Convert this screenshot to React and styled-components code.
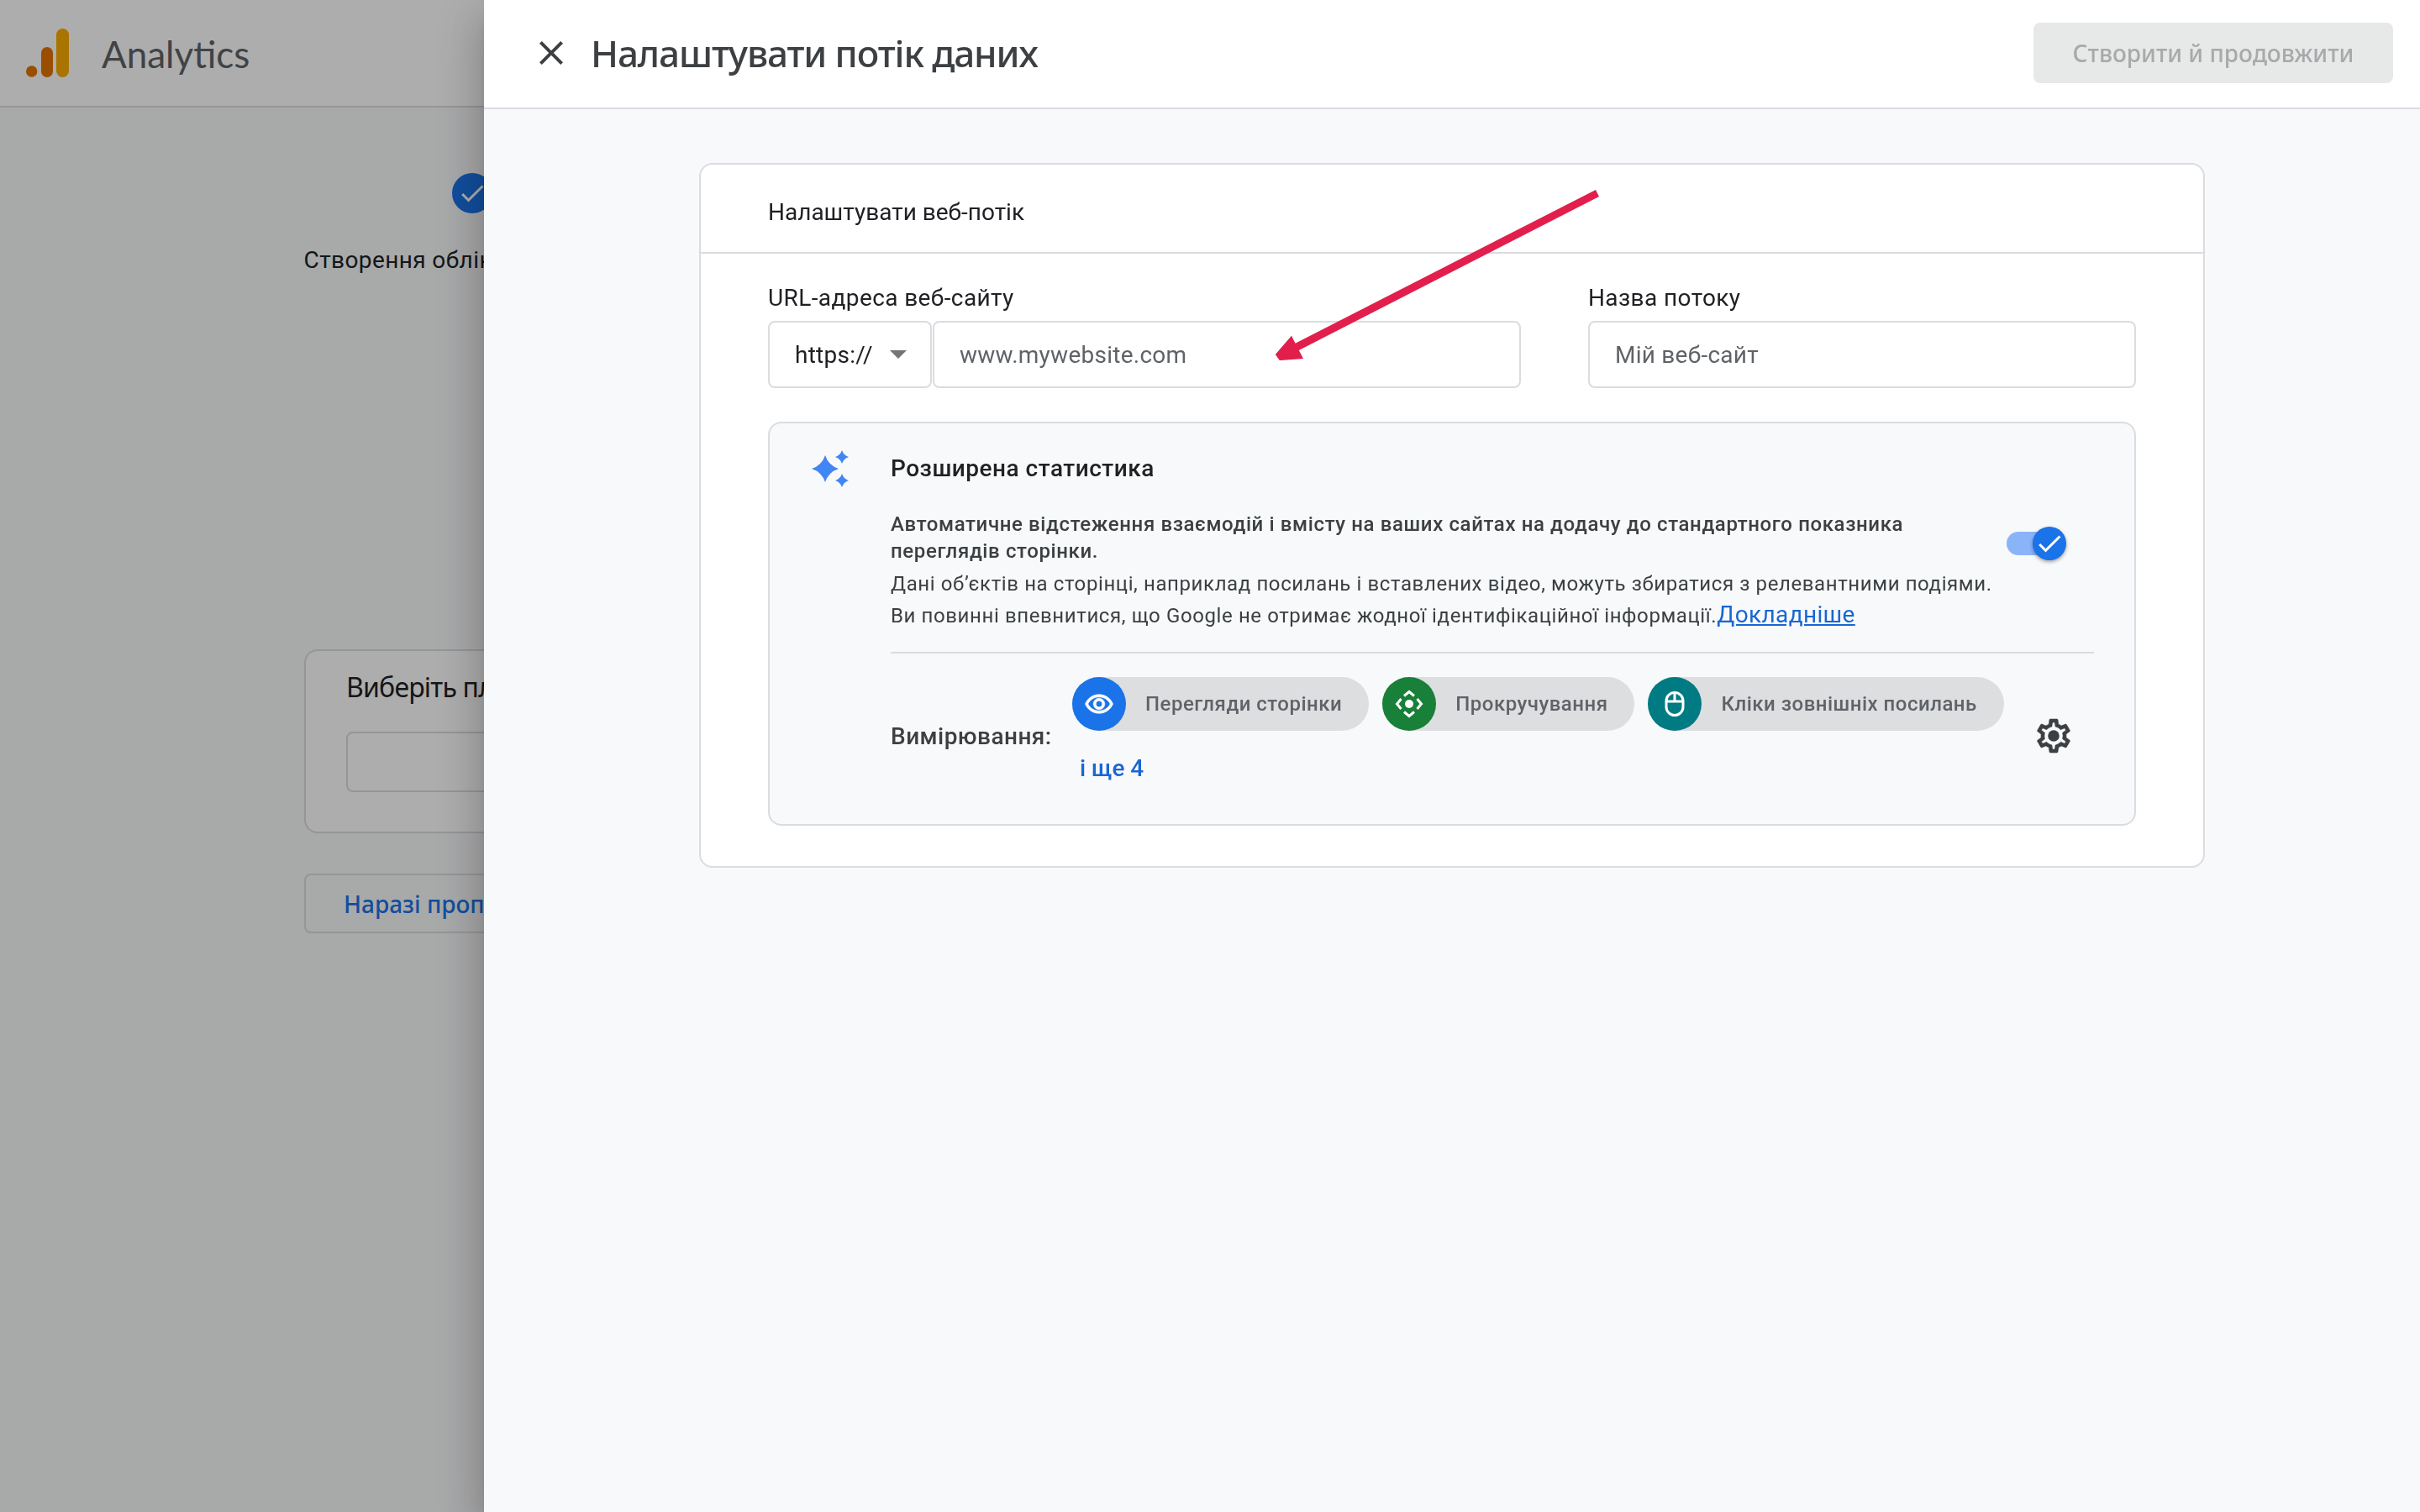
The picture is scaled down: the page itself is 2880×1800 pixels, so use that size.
import React from "react";
import styled, { createGlobalStyle } from "styled-components";

const SANS = '"Noto Sans", "Open Sans", sans-serif';
const BODY = 'Roboto, "Noto Sans", sans-serif';

const Global = createGlobalStyle`
  html, body { margin: 0; padding: 0; height: 1800px; overflow: hidden; background: #f8f9fa; }
  * { box-sizing: border-box; }
  body { font-family: ${BODY}; color: #202124; }
`;

/* ---------- page behind the panel ---------- */
const Page = styled.div`
  width: 2880px;
  height: 1800px;
  background: #f8f9fa;
  overflow: hidden;
`;
const TopBar = styled.header`
  height: 128px;
  background: #fff;
  border-bottom: 2px solid #dadce0;
  display: flex;
  align-items: center;
  padding-left: 31px;
  gap: 39px;
`;
const Logo = styled.svg`
  width: 51px;
  height: 58px;
  flex: none;
`;
const Brand = styled.span`
  font-family: "Lato", ${SANS};
  font-size: 44px;
  color: #5f6368;
  position: relative;
  top: 1px;
`;
const Main = styled.main`
  padding: 78px 0 0 362px;
`;
const Step = styled.div`
  width: 400px;
  display: flex;
  flex-direction: column;
  align-items: center;
`;
const StepDot = styled.div`
  width: 48px;
  height: 48px;
  border-radius: 50%;
  background: #1a73e8;
  display: flex;
  align-items: center;
  justify-content: center;
`;
const StepLabel = styled.div`
  margin-top: 38px;
  font-size: 28px;
  line-height: 36px;
  letter-spacing: 0.4px;
  white-space: nowrap;
  color: #202124;
`;
const PlanCard = styled.section`
  margin-top: 445px;
  width: 1200px;
  height: 219px;
  border: 2px solid #dadce0;
  border-radius: 16px;
  background: #fff;
  padding: 21px 48px;
`;
const PlanTitle = styled.div`
  font-family: ${SANS};
  font-size: 32px;
  line-height: 44px;
  letter-spacing: -0.8px;
  color: #202124;
`;
const PlanField = styled.div`
  margin-top: 31px;
  height: 72px;
  border: 2px solid #dadce0;
  border-radius: 8px;
`;
const SkipButton = styled.div`
  margin-top: 48px;
  width: 800px;
  height: 71px;
  border: 2px solid #dadce0;
  border-radius: 8px;
  display: flex;
  align-items: center;
  padding-left: 45px;
  font-family: ${SANS};
  font-size: 28px;
  font-weight: 500;
  color: #1a73e8;
`;
const Scrim = styled.div`
  position: fixed;
  inset: 0;
  background: rgba(0, 0, 0, 0.32);
`;

/* ---------- slide-in panel ---------- */
const Panel = styled.aside`
  position: fixed;
  top: 0;
  bottom: 0;
  left: 576px;
  right: 0;
  background: #f8f9fa;
  display: flex;
  flex-direction: column;
  box-shadow: 0 16px 20px -10px rgba(0, 0, 0, 0.2), 0 32px 48px 4px rgba(0, 0, 0, 0.14),
    0 12px 60px 10px rgba(0, 0, 0, 0.12);
`;
const PanelHeader = styled.div`
  height: 130px;
  flex: none;
  background: #fff;
  border-bottom: 2px solid #dadce0;
  display: flex;
  align-items: center;
  padding: 0 32px 2px 56px;
`;
const CloseIcon = styled.svg`
  width: 48px;
  height: 48px;
  fill: #3c4043;
  flex: none;
`;
const PanelTitle = styled.h1`
  margin: 0 0 0 23px;
  font-family: ${SANS};
  font-size: 44px;
  font-weight: 500;
  letter-spacing: -1.1px;
  color: #3c4043;
  flex: 1;
`;
const PrimaryButton = styled.button`
  width: 428px;
  height: 72px;
  border: 0;
  border-radius: 8px;
  background: #e7e8e8;
  color: #a7a9aa;
  font-family: ${SANS};
  font-size: 28px;
  font-weight: 500;
`;
const PanelBody = styled.div`
  flex: 1;
  padding-top: 64px;
`;
const Card = styled.section`
  width: 1792px;
  margin: 0 auto;
  background: #fff;
  border: 2px solid #dadce0;
  border-radius: 16px;
  padding-bottom: 48px;
`;
const CardHeader = styled.div`
  height: 106px;
  border-bottom: 2px solid #dadce0;
  padding: 8px 80px 0;
  display: flex;
  align-items: center;
  font-size: 28px;
  color: #202124;
`;
const FormGrid = styled.div`
  display: grid;
  grid-template-columns: 896px 652px;
  column-gap: 80px;
  padding: 35px 80px 0;
`;
const Label = styled.label`
  display: block;
  font-size: 28px;
  line-height: 36px;
  letter-spacing: 0.4px;
  margin-bottom: 9px;
  color: #202124;
`;
const InputRow = styled.div`
  display: flex;
  gap: 1px;
`;
const Select = styled.div`
  width: 195px;
  height: 80px;
  border: 2px solid #dadce0;
  border-radius: 8px;
  background: #fff;
  display: flex;
  align-items: center;
  padding-left: 30px;
  font-size: 28px;
  letter-spacing: 0.25px;
  color: #202124;
  flex: none;
`;
const Caret = styled.span`
  margin-left: 20px;
  border-left: 10px solid transparent;
  border-right: 10px solid transparent;
  border-top: 10px solid #757575;
`;
const TextField = styled.input`
  flex: 1;
  width: 100%;
  min-width: 0;
  height: 80px;
  border: 2px solid #dadce0;
  border-radius: 8px;
  background: #fff;
  padding: 0 30px;
  font-family: ${BODY};
  font-size: 28px;
  letter-spacing: 0.25px;
  color: #202124;
  &::placeholder { color: #5f6368; opacity: 1; }
`;
const Banner = styled.div`
  margin: 40px 80px 0;
  height: 481px;
  border: 2px solid #dadce0;
  border-radius: 16px;
  background: #f8f9fa;
  display: flex;
`;
const SparkleBox = styled.div`
  width: 144px;
  flex: none;
  padding: 32px 0 0 50px;
`;
const Sparkle = styled.svg`
  width: 46px;
  height: 46px;
  fill: #4285f4;
  display: block;
`;
const BannerMain = styled.div`
  width: 1432px;
  padding-top: 34px;
`;
const BannerTitle = styled.div`
  font-size: 28px;
  line-height: 40px;
  font-weight: 500;
  letter-spacing: 0.5px;
  color: #202124;
`;
const DescRow = styled.div`
  display: flex;
  margin-top: 30px;
  padding-bottom: 27px;
  border-bottom: 2px solid #dadce0;
`;
const Desc = styled.div`
  width: 1328px;
  flex: none;
  font-size: 24px;
  letter-spacing: 0.6px;
  color: #3c4043;
`;
const Strong = styled.p`
  margin: 0;
  font-weight: 500;
  line-height: 32px;
  letter-spacing: 0.62px;
`;
const Line = styled.p`
  margin: 7px 0 0;
  line-height: 32px;
  & + & { margin-top: 5px; }
`;
const MoreLink = styled.a`
  font-size: 28px;
  letter-spacing: 0.36px;
  color: #1967d2;
  text-decoration: underline;
`;
const Toggle = styled.div`
  width: 61px;
  height: 28px;
  margin-top: 25px;
  border-radius: 14px;
  background: #8ab4f8;
  display: flex;
  align-items: center;
  flex: none;
`;
const Thumb = styled.div`
  width: 40px;
  height: 40px;
  border-radius: 50%;
  background: #1a73e8;
  margin-left: auto;
  margin-right: -10px;
  flex: none;
  display: flex;
  align-items: center;
  justify-content: center;
  box-shadow: 0 2px 4px rgba(0, 0, 0, 0.35);
`;
const Metrics = styled.div`
  display: flex;
  margin-top: 28px;
`;
const MetricsLabel = styled.div`
  width: 216px;
  flex: none;
  align-self: center;
  font-size: 28px;
  font-weight: 500;
  letter-spacing: 0.45px;
  color: #3c4043;
`;
const MetricsBody = styled.div`
  height: 140px;
`;
const Chips = styled.div`
  display: flex;
  gap: 16px;
`;
const Chip = styled.div`
  height: 64px;
  border-radius: 32px;
  background: #dddee0;
  display: flex;
  align-items: center;
  padding-right: 32px;
  font-size: 24px;
  font-weight: 500;
  letter-spacing: 0.5px;
  color: #5f6368;
`;
const ChipIcon = styled.div`
  width: 64px;
  height: 64px;
  border-radius: 50%;
  background: ${(p) => p.$color};
  margin-right: 23px;
  display: flex;
  align-items: center;
  justify-content: center;
  flex: none;
`;
const EyeGlyph = styled.svg`
  width: 36px;
  height: 36px;
  fill: #fff;
  stroke: #fff;
  stroke-width: 0.45;
`;
const More = styled.a`
  display: block;
  margin: 28px 0 0 9px;
  font-size: 28px;
  font-weight: 500;
  color: #1967d2;
`;
const Gear = styled.svg`
  width: 48px;
  height: 48px;
  margin: 46px 0 0 35px;
  fill: #3c4043;
  stroke: #3c4043;
  stroke-width: 0.3;
  flex: none;
`;
const Arrow = styled.svg`
  position: fixed;
  left: 1500px;
  top: 220px;
  width: 420px;
  height: 220px;
`;

const GEAR =
  "M19.43 12.98c.04-.32.07-.64.07-.98 0-.34-.03-.66-.07-.98l2.11-1.65c.19-.15.24-.42.12-.64l-2-3.46c-.09-.16-.26-.25-.44-.25-.06 0-.12.01-.17.03l-2.49 1c-.52-.4-1.08-.73-1.69-.98l-.38-2.65C14.46 2.18 14.25 2 14 2h-4c-.25 0-.46.18-.49.42l-.38 2.65c-.61.25-1.17.59-1.69.98l-2.49-1c-.06-.02-.12-.03-.18-.03-.17 0-.34.09-.43.25l-2 3.46c-.13.22-.07.49.12.64l2.11 1.65c-.04.32-.07.65-.07.98 0 .33.03.66.07.98l-2.11 1.65c-.19.15-.24.42-.12.64l2 3.46c.09.16.26.25.44.25.06 0 .12-.01.17-.03l2.49-1c.52.4 1.08.73 1.69.98l.38 2.65c.03.24.24.42.49.42h4c.25 0 .46-.18.49-.42l.38-2.65c.61-.25 1.17-.59 1.69-.98l2.49 1c.06.02.12.03.18.03.17 0 .34-.09.43-.25l2-3.46c.12-.22.07-.49-.12-.64l-2.11-1.65zm-1.98-1.71c.04.31.05.52.05.73 0 .21-.02.43-.05.73l-.14 1.13.89.7 1.08.84-.7 1.21-1.27-.51-1.04-.42-.9.68c-.43.32-.84.56-1.25.73l-1.06.43-.16 1.13-.2 1.35h-1.4l-.19-1.35-.16-1.13-1.06-.43c-.43-.18-.83-.41-1.23-.71l-.91-.7-1.06.43-1.27.51-.7-1.21 1.08-.84.89-.7-.14-1.13c-.03-.31-.05-.54-.05-.74s.02-.43.05-.73l.14-1.13-.89-.7-1.08-.84.7-1.21 1.27.51 1.04.42.9-.68c.43-.32.84-.56 1.25-.73l1.06-.43.16-1.13.2-1.35h1.39l.19 1.35.16 1.13 1.06.43c.43.18.83.41 1.23.71l.91.7 1.06-.43 1.27-.51.7 1.21-1.07.85-.89.7.14 1.13z";
const EYE =
  "M12 6.5c3.79 0 7.17 2.13 8.82 5.5-1.65 3.37-5.02 5.5-8.82 5.5S4.83 15.37 3.18 12C4.83 8.63 8.21 6.5 12 6.5m0-2C7 4.5 2.73 7.61 1 12c1.73 4.39 6 7.5 11 7.5s9.27-3.11 11-7.5c-1.73-4.39-6-7.5-11-7.5zm0 5c1.38 0 2.5 1.12 2.5 2.5s-1.12 2.5-2.5 2.5-2.5-1.12-2.5-2.5 1.12-2.5 2.5-2.5m0-2c-2.48 0-4.5 2.02-4.5 4.5s2.02 4.5 4.5 4.5 4.5-2.02 4.5-4.5-2.02-4.5-4.5-4.5z";
const CHECK = "M9 16.17L4.83 12l-1.42 1.41L9 19 21 7l-1.41-1.41z";

const Star = ({ cx, cy, r }) => {
  const k = r * 0.25;
  return (
    <path
      d={`M${cx} ${cy - r}Q${cx + k} ${cy - k} ${cx + r} ${cy}Q${cx + k} ${cy + k} ${cx} ${cy + r}Q${cx - k} ${cy + k} ${cx - r} ${cy}Q${cx - k} ${cy - k} ${cx} ${cy - r}Z`}
    />
  );
};

export default function App() {
  return (
    <>
      <Global />
      <Page>
        <TopBar>
          <Logo viewBox="0 0 51 58">
            <rect x="36" y="0" width="15" height="58" rx="7.5" fill="#f9ab00" />
            <rect x="18" y="22" width="14" height="36" rx="7" fill="#e37400" />
            <circle cx="6.7" cy="51" r="6.7" fill="#e37400" />
          </Logo>
          <Brand>Analytics</Brand>
        </TopBar>
        <Main>
          <Step>
            <StepDot>
              <svg width="36" height="36" viewBox="0 0 24 24" fill="#fff">
                <path d={CHECK} />
              </svg>
            </StepDot>
            <StepLabel>Створення облікового запису</StepLabel>
          </Step>
          <PlanCard>
            <PlanTitle>Виберіть платформу</PlanTitle>
            <PlanField />
          </PlanCard>
          <SkipButton>Наразі пропустити</SkipButton>
        </Main>
      </Page>
      <Scrim />
      <Panel>
        <PanelHeader>
          <CloseIcon viewBox="0 0 24 24">
            <path d="M19 6.41L17.59 5 12 10.59 6.41 5 5 6.41 10.59 12 5 17.59 6.41 19 12 13.41 17.59 19 19 17.59 13.41 12z" />
          </CloseIcon>
          <PanelTitle>Налаштувати потік даних</PanelTitle>
          <PrimaryButton disabled>Створити й продовжити</PrimaryButton>
        </PanelHeader>
        <PanelBody>
          <Card>
            <CardHeader>Налаштувати веб-потік</CardHeader>
            <FormGrid>
              <div>
                <Label>URL-адреса веб-сайту</Label>
                <InputRow>
                  <Select>
                    https://
                    <Caret />
                  </Select>
                  <TextField placeholder="www.mywebsite.com" readOnly />
                </InputRow>
              </div>
              <div>
                <Label>Назва потоку</Label>
                <TextField placeholder="Мій веб-сайт" readOnly />
              </div>
            </FormGrid>
            <Banner>
              <SparkleBox>
                <Sparkle viewBox="0 0 46 46">
                  <Star cx={16} cy={22} r={16} />
                  <Star cx={36} cy={8} r={8} />
                  <Star cx={36} cy={36} r={8} />
                </Sparkle>
              </SparkleBox>
              <BannerMain>
                <BannerTitle>Розширена статистика</BannerTitle>
                <DescRow>
                  <Desc>
                    <Strong>
                      Автоматичне відстеження взаємодій і вмісту на ваших сайтах на додачу до стандартного показника
                      переглядів сторінки.
                    </Strong>
                    <Line>Дані об’єктів на сторінці, наприклад посилань і вставлених відео, можуть збиратися з релевантними подіями.</Line>
                    <Line>
                      Ви повинні впевнитися, що Google не отримає жодної ідентифікаційної інформації.
                      <MoreLink>Докладніше</MoreLink>
                    </Line>
                  </Desc>
                  <Toggle>
                    <Thumb>
                      <svg width="36" height="36" viewBox="0 0 24 24" fill="#fff">
                        <path d={CHECK} />
                      </svg>
                    </Thumb>
                  </Toggle>
                </DescRow>
                <Metrics>
                  <MetricsLabel>Вимірювання:</MetricsLabel>
                  <MetricsBody>
                    <Chips>
                      <Chip>
                        <ChipIcon $color="#1a73e8">
                          <EyeGlyph viewBox="0 0 24 24">
                            <path d={EYE} />
                          </EyeGlyph>
                        </ChipIcon>
                        Перегляди сторінки
                      </Chip>
                      <Chip>
                        <ChipIcon $color="#188038">
                          <svg width="36" height="36" viewBox="0 0 36 36" fill="none" stroke="#fff" strokeWidth="3">
                            <path d="M12 8.5L18 3.5L24 8.5M12 27.5L18 32.5L24 27.5M8.5 12L3.5 18L8.5 24M27.5 12L32.5 18L27.5 24" />
                            <circle cx="18" cy="18" r="5" fill="#fff" stroke="none" />
                          </svg>
                        </ChipIcon>
                        Прокручування
                      </Chip>
                      <Chip>
                        <ChipIcon $color="#007b83">
                          <svg width="36" height="36" viewBox="0 0 36 36" fill="none" stroke="#fff" strokeWidth="3">
                            <rect x="8" y="4.5" width="20" height="27" rx="10" />
                            <path d="M18 4.5V15M8 15H28" />
                          </svg>
                        </ChipIcon>
                        Кліки зовнішніх посилань
                      </Chip>
                    </Chips>
                    <More>і ще 4</More>
                  </MetricsBody>
                  <Gear viewBox="0 0 24 24">
                    <path d={GEAR} />
                    <circle cx="12" cy="12" r="3.4" stroke="none" />
                  </Gear>
                </Metrics>
              </BannerMain>
            </Banner>
          </Card>
        </PanelBody>
      </Panel>
      <Arrow viewBox="1500 220 420 220">
        <path d="M1899 226L1903 234L1538 421L1523 429L1518 422L1537 400L1541 409Z" fill="#e21f4c" />
        <path d="M1537 400L1551 427L1523 429L1518 422Z" fill="#e21f4c" />
      </Arrow>
    </>
  );
}
